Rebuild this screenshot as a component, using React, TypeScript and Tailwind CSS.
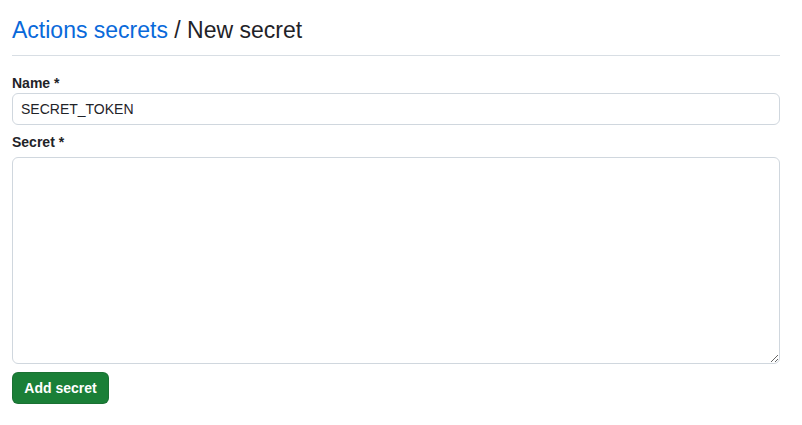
import React from "react";

export default function App(): JSX.Element {
  return (
    <div className="min-h-screen w-full bg-white text-[#1f2328] font-['Liberation_Sans',Arial,sans-serif]">
      <div className="ml-3 w-[768px] pt-[15px]">
        <div className="border-b border-[#d8dee4] pb-[10px]">
          <h1 className="text-[23px] leading-[30px] font-normal">
            <a href="#" className="text-[#0969da]">
              Actions secrets
            </a>{" "}
            / New secret
          </h1>
        </div>

        <form className="flex flex-col" onSubmit={(e) => e.preventDefault()}>
          <label htmlFor="secret_name" className="mt-[17px] block h-5 text-sm leading-5 font-bold">
            Name *
          </label>
          <input
            id="secret_name"
            type="text"
            defaultValue="SECRET_TOKEN"
            className="h-8 w-full rounded-md border border-[#d0d7de] bg-white px-2 text-sm leading-5 text-[#1f2328] outline-none"
          />

          <label htmlFor="secret_value" className="mt-[7px] block h-5 text-sm leading-5 font-bold">
            Secret *
          </label>
          <textarea
            id="secret_value"
            className="mt-[5px] h-[207px] w-full rounded-md border border-[#d0d7de] bg-white px-2 py-1 text-sm text-[#1f2328] outline-none"
          />

          <div className="mt-2">
            <button
              type="submit"
              className="flex h-8 w-[97px] items-center justify-center rounded-md border border-[#1b1f2426] bg-[#1a7f37] text-sm font-bold text-white"
            >
              Add secret
            </button>
          </div>
        </form>
      </div>
    </div>
  );
}
